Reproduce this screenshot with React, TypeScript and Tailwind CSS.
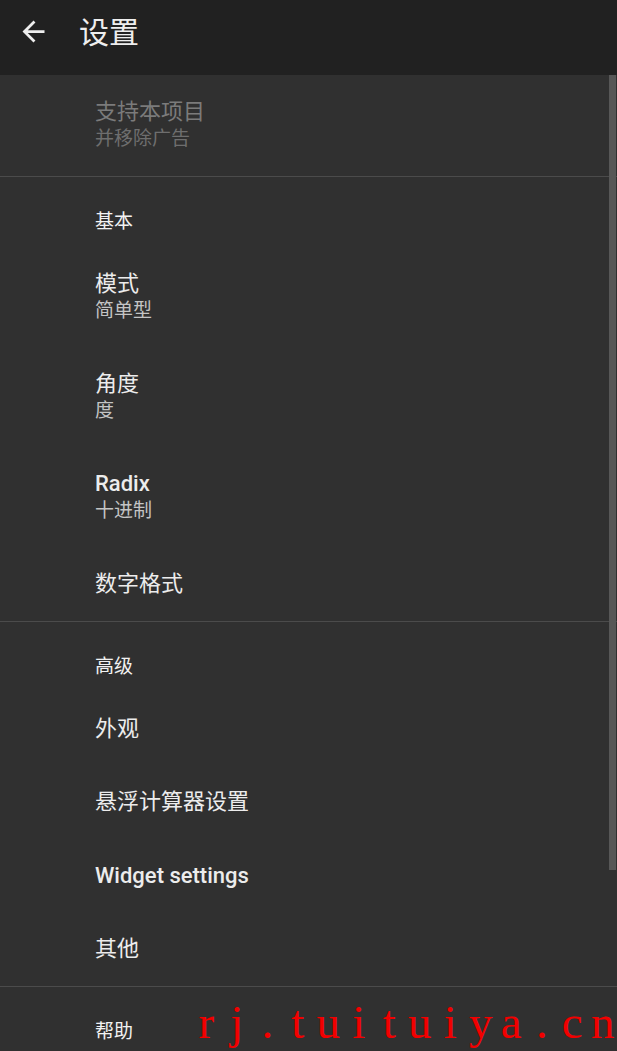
import React from "react";

type Pref = {
  title: string;
  summary?: string;
  disabled?: boolean;
  latin?: boolean;
};

const basic: Pref[] = [
  { title: "模式", summary: "简单型" },
  { title: "角度", summary: "度" },
  { title: "Radix", summary: "十进制", latin: true },
  { title: "数字格式" },
];

const advanced: Pref[] = [
  { title: "外观" },
  { title: "悬浮计算器设置" },
  { title: "Widget settings", latin: true },
  { title: "其他" },
];

const watermark = "rj.tuituiya.cn";

function BackArrow() {
  return (
    <svg width="33" height="33" viewBox="0 0 24 24" fill="currentColor" aria-hidden>
      <path d="M20 11H7.83l5.59-5.59L12 4l-8 8 8 8 1.41-1.41L7.83 13H20v-2z" />
    </svg>
  );
}

function PrefRow({ item }: { item: Pref }) {
  const titleColor = item.disabled ? "text-[#7b7b7b]" : "text-[#ececec]";
  const summaryColor = item.disabled ? "text-[#6e6e6e]" : "text-[#c4c4c4]";
  const weight = item.latin ? "font-medium" : "font-normal";
  return (
    <div
      className={
        item.summary
          ? "flex h-[100px] flex-col justify-center pl-[95px]"
          : "flex h-[73.5px] flex-col justify-center pl-[95px]"
      }
    >
      <div className={`text-[22px] leading-[27px] ${weight} ${titleColor}`}>{item.title}</div>
      {item.summary && (
        <div className={`text-[19px] leading-[27px] ${summaryColor}`}>{item.summary}</div>
      )}
    </div>
  );
}

function Category({ title }: { title: string }) {
  return (
    <div className="h-[70px] pl-[95px] pt-[32px] text-[19px] leading-[26px] text-[#f2f2f2]">
      {title}
    </div>
  );
}

function Divider() {
  return <div className="h-px bg-[#4b4b4b]" />;
}

export default function App() {
  return (
    <div className="relative h-[1051px] w-[617px] overflow-hidden bg-[#303030] font-['Roboto','Noto_Sans_CJK_SC',sans-serif]">
      {/* toolbar */}
      <header className="flex h-[75px] items-center bg-[#212121] text-[#eeeeee]">
        <div className="ml-[17px] -mt-[12px] flex w-[33px] justify-center">
          <BackArrow />
        </div>
        <h1 className="ml-[29px] -mt-[10px] text-[30px] leading-none">设置</h1>
      </header>

      <main>
        <div className="h-[101px]">
          <PrefRow item={{ title: "支持本项目", summary: "并移除广告", disabled: true }} />
        </div>
        <Divider />
        <Category title="基本" />
        {basic.map((p) => (
          <PrefRow key={p.title} item={p} />
        ))}
        <Divider />
        <Category title="高级" />
        {advanced.map((p) => (
          <PrefRow key={p.title} item={p} />
        ))}
        <Divider />
        <Category title="帮助" />
      </main>

      {/* scroll indicator */}
      <div className="absolute right-[1px] top-[75px] h-[795px] w-[7px] bg-[#575757]" />

      {/* site stamp */}
      <div className="absolute left-[191px] top-[996px] flex font-['Liberation_Serif',serif] text-[47px] leading-[52px] text-[#f20000]">
        {watermark.split("").map((ch, i) => (
          <span key={i} className="inline-block w-[30.5px] text-center">
            {ch}
          </span>
        ))}
      </div>
    </div>
  );
}
